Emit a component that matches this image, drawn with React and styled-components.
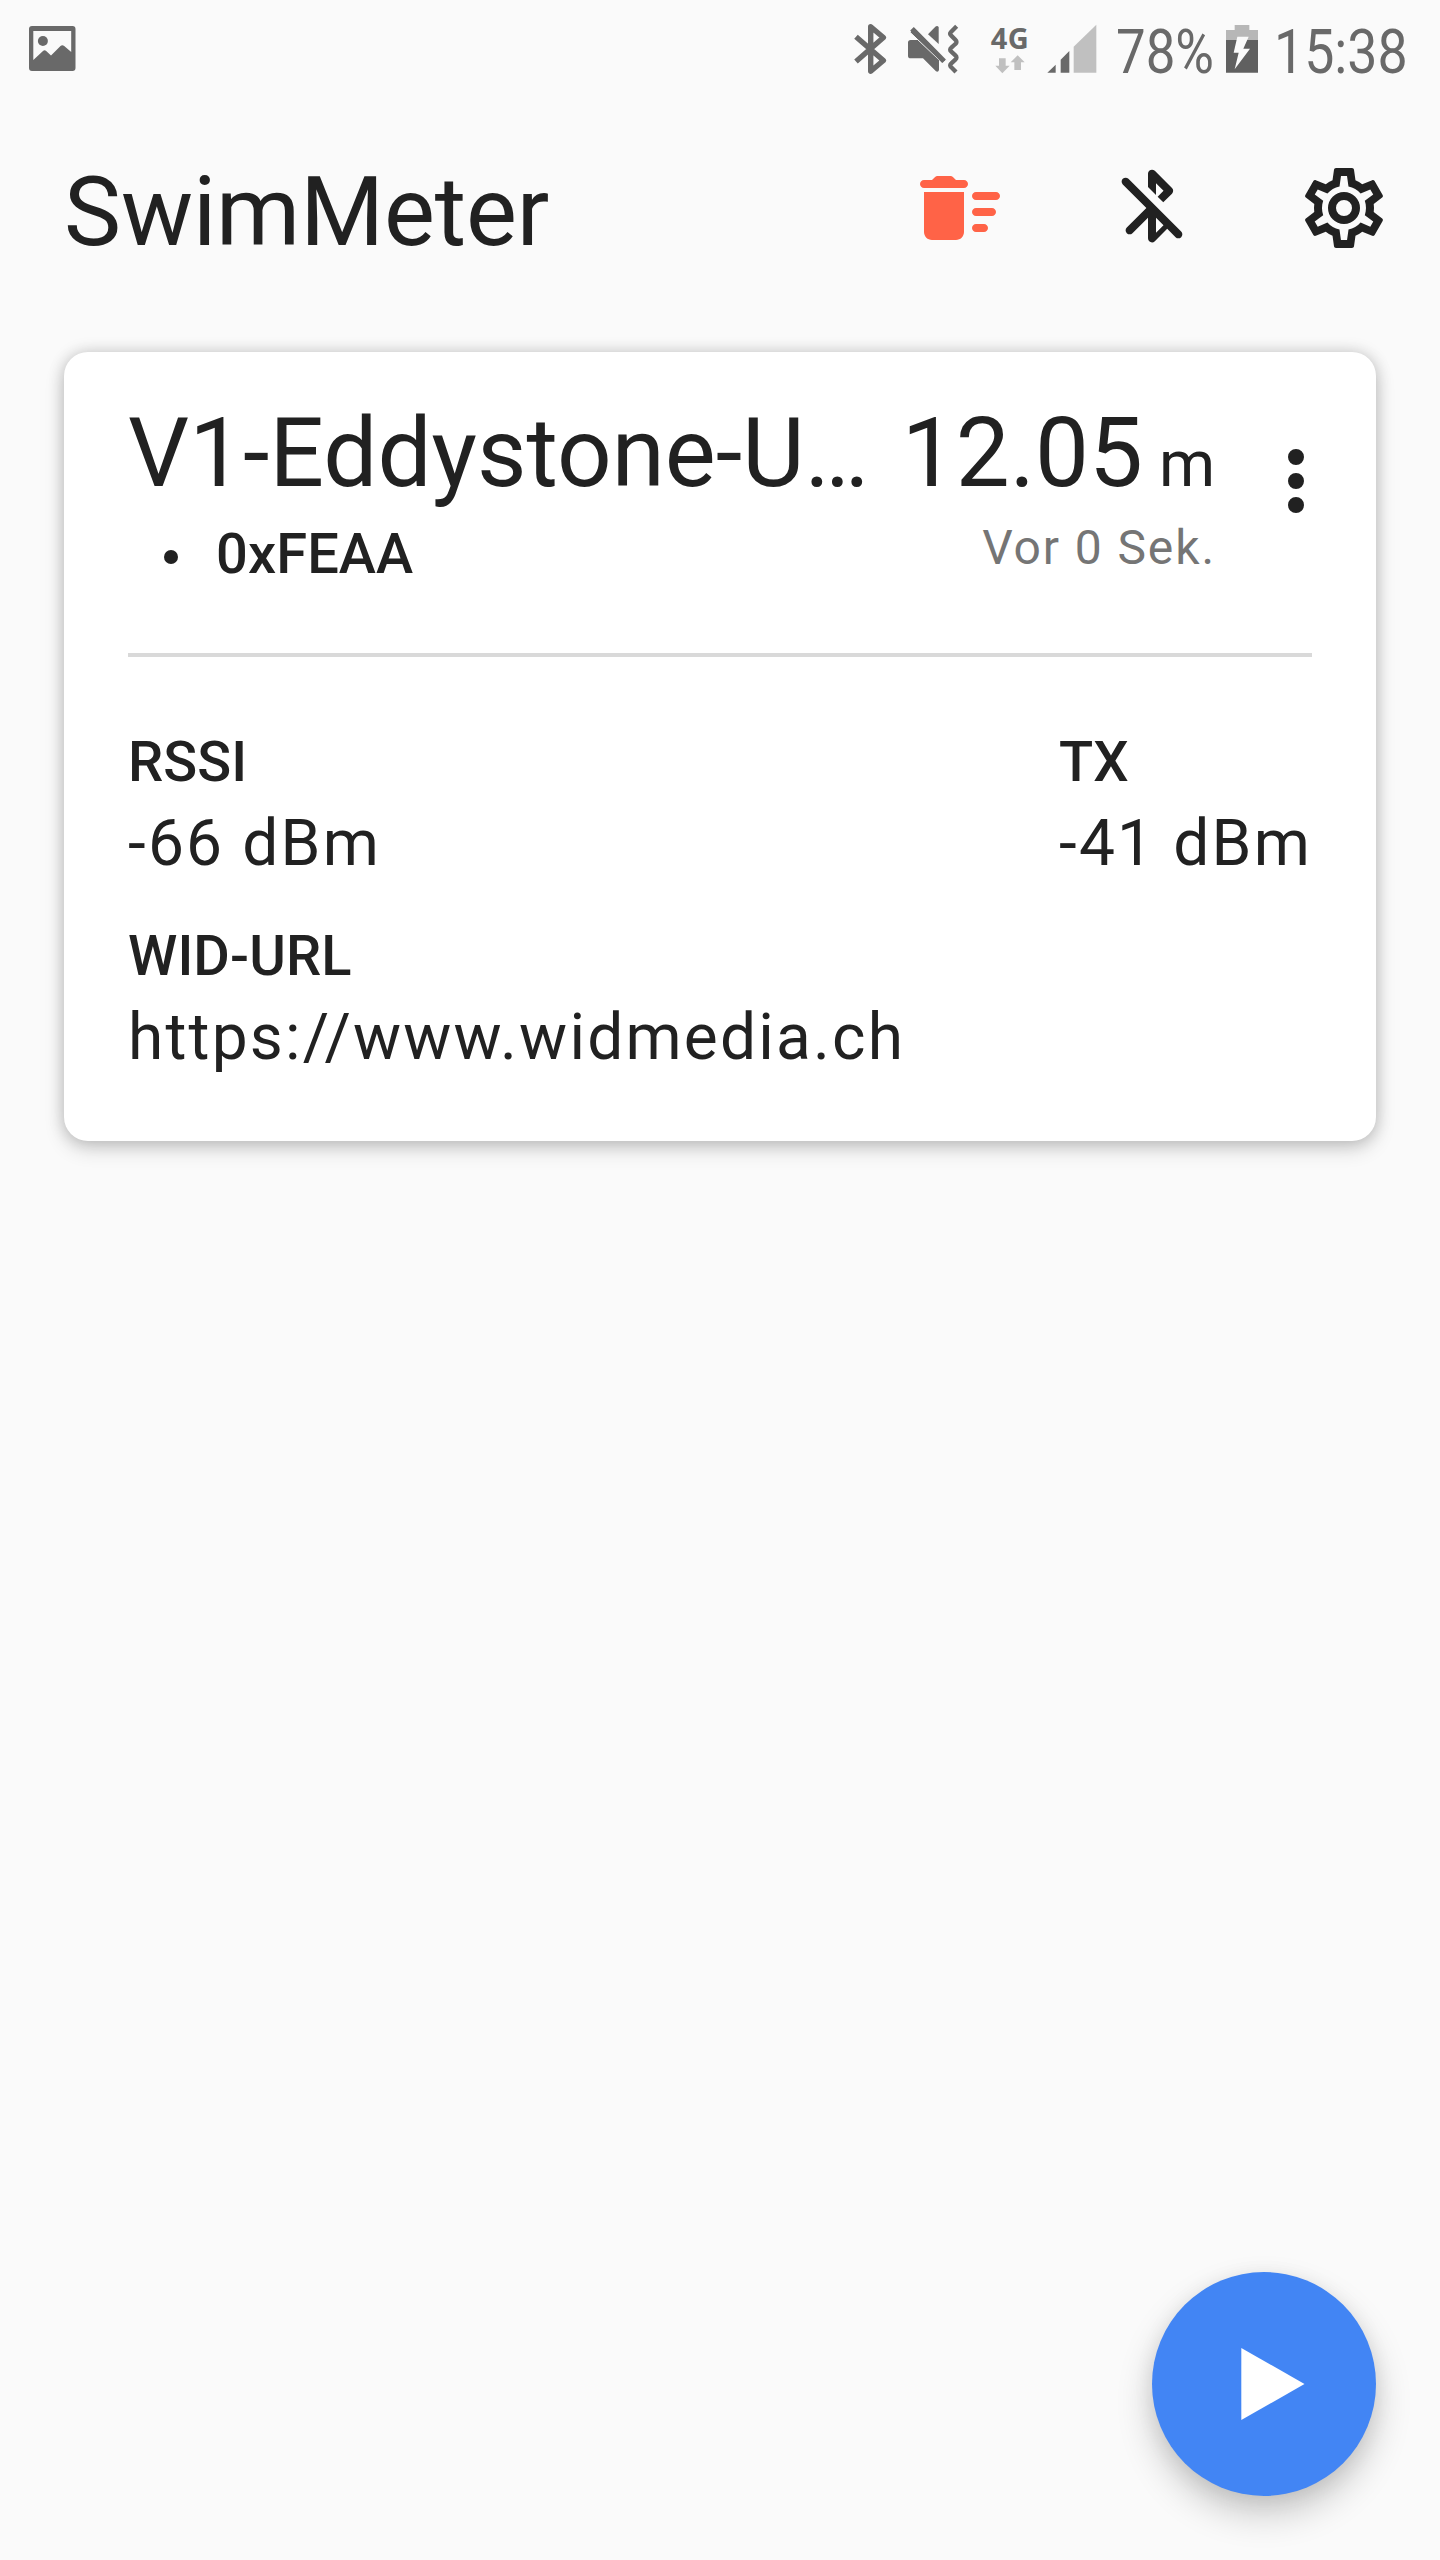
import React from "react";
import styled, { createGlobalStyle } from "styled-components";

const GlobalStyle = createGlobalStyle`
  * { box-sizing: border-box; }
  body { margin: 0; background: #fafafa; }
`;

const INK = "#212121";
const STATUS = "#696969";
const STATUS_LIGHT = "#c0c0c0";

const Screen = styled.div`
  width: 1440px;
  height: 2560px;
  display: flex;
  flex-direction: column;
  background: #fafafa;
  color: ${INK};
  font-family: Roboto, "Liberation Sans", sans-serif;
  overflow: hidden;
`;

const StatusBar = styled.header`
  height: 96px;
  display: flex;
  align-items: center;
  justify-content: space-between;
  padding: 0 33px 0 28px;
  color: ${STATUS};
`;

const StatusGroup = styled.div`
  display: flex;
  align-items: center;
  height: 96px;
`;

const Glyph = styled.svg`
  display: block;
  flex: none;
  width: ${(p) => p.$w}px;
  height: ${(p) => p.$h || 96}px;
  margin-left: ${(p) => p.$gap || 0}px;
`;

const Network = styled.div`
  width: 40px;
  height: 96px;
  margin-left: 31px;
  padding-top: 20px;
  display: flex;
  flex-direction: column;
  align-items: center;
`;

const NetworkLabel = styled.span`
  font: 700 29px/35px "Noto Sans", sans-serif;
  letter-spacing: 0.4px;
`;

const StatusText = styled.span`
  width: ${(p) => p.$w}px;
  margin-left: ${(p) => p.$gap}px;
  padding-top: 7px;
  font-size: 61px;
  line-height: 90px;
  white-space: nowrap;
`;

const Condensed = styled.span`
  display: inline-block;
  transform: scaleX(${(p) => p.$ratio});
  transform-origin: left center;
`;

const Toolbar = styled.div`
  height: 224px;
  display: flex;
  align-items: center;
  padding-left: 64px;
`;

const AppTitle = styled.h1`
  flex: 1;
  margin: 0;
  padding-top: 8px;
  font-size: 96px;
  line-height: 112px;
  font-weight: 400;
  letter-spacing: -0.12px;
`;

const IconButton = styled.button`
  width: 192px;
  height: 192px;
  display: flex;
  align-items: center;
  justify-content: center;
  padding: 0;
  border: 0;
  background: none;
  color: ${(p) => p.$color || INK};
`;

const Content = styled.main`
  flex: 1;
  padding: 32px 64px 0;
`;

const Card = styled.article`
  height: 789px;
  padding: 45px 64px 0;
  border-radius: 24px;
  background: #fff;
  box-shadow: 0 8px 20px rgba(0, 0, 0, 0.16), 0 0 16px rgba(0, 0, 0, 0.18);
`;

const CardHeader = styled.div`
  display: flex;
  height: 256px;
`;

const Identity = styled.div`
  flex: 1;
  min-width: 0;
`;

const Name = styled.h2`
  margin: 0;
  font-size: 96px;
  line-height: 112px;
  font-weight: 400;
  white-space: nowrap;
`;

const Services = styled.ul`
  margin: 13px 0 0;
  padding: 0;
  list-style: none;
`;

const Service = styled.li`
  display: flex;
  align-items: center;
  padding-left: 36px;
  font-size: 56px;
  line-height: 64px;
  font-weight: 500;
  letter-spacing: 0.1px;

  &::before {
    content: "";
    width: 14px;
    height: 14px;
    margin: 6px 38px 0 0;
    border-radius: 50%;
    background: ${INK};
  }
`;

const Reading = styled.div`
  text-align: right;
`;

const Distance = styled.div`
  padding-right: 1px;
  font-size: 96px;
  line-height: 112px;
  white-space: nowrap;
`;

const Unit = styled.span`
  margin-left: 16px;
  font-size: 64px;
  line-height: 1;
`;

const Seen = styled.div`
  margin-top: 11px;
  color: #757575;
  font-size: 48px;
  line-height: 56px;
  letter-spacing: 1.9px;
`;

const MenuButton = styled.button`
  width: 96px;
  height: 96px;
  margin: 36px -32px 0 32px;
  padding: 0;
  border: 0;
  background: none;
  color: ${INK};
`;

const Divider = styled.hr`
  height: 4px;
  margin: 0 0 73px;
  border: 0;
  background: #d9d9d9;
`;

const Fields = styled.dl`
  margin: 0;
  display: flex;
  flex-wrap: wrap;
  justify-content: space-between;
  row-gap: 42px;
`;

const Field = styled.div`
  flex: ${(p) => (p.$wide ? "0 0 100%" : "none")};
`;

const Label = styled.dt`
  font-size: 56px;
  line-height: 64px;
  font-weight: 500;
  letter-spacing: 0.1px;
`;

const Value = styled.dd`
  margin: 12px 0 0;
  font-size: 64px;
  line-height: 76px;
  letter-spacing: 2.2px;
`;

const Footer = styled.footer`
  display: flex;
  justify-content: flex-end;
  padding: 0 64px 64px;
`;

const Fab = styled.button`
  width: 224px;
  height: 224px;
  padding: 0;
  border: 0;
  border-radius: 50%;
  background: #4285f4;
  box-shadow: 0 18px 36px rgba(0, 0, 0, 0.2), 0 4px 20px rgba(0, 0, 0, 0.08);
`;

const Icon = ({ d }) => (
  <Glyph $w={96} $h={96} viewBox="0 0 24 24" fill="currentColor">
    <path d={d} />
  </Glyph>
);

const DELETE_SWEEP =
  "M16 16h2c.55 0 1 .45 1 1s-.45 1-1 1h-2c-.55 0-1-.45-1-1s.45-1 1-1zm0-8h5c.55 0 1 .45 1 1s-.45 1-1 1h-5c-.55 0-1-.45-1-1s.45-1 1-1zm0 4h4c.55 0 1 .45 1 1s-.45 1-1 1h-4c-.55 0-1-.45-1-1s.45-1 1-1zM3 18c0 1.1.9 2 2 2h6c1.1 0 2-.9 2-2V8H3v10zM13 5h-2l-.71-.71c-.18-.18-.44-.29-.7-.29H6.41c-.26 0-.52.11-.7.29L5 5H3c-.55 0-1 .45-1 1s.45 1 1 1h10c.55 0 1-.45 1-1s-.45-1-1-1z";
const BLUETOOTH_OFF =
  "M19.29 17.89L6.11 4.7c-.39-.39-1.02-.39-1.41 0-.39.39-.39 1.02 0 1.41L10.59 12 5.7 16.89c-.39.39-.39 1.02 0 1.41.39.39 1.02.39 1.41 0L11 14.41v5.18c0 .89 1.08 1.34 1.71.71l3.09-3.09 2.09 2.09c.39.39 1.02.39 1.41 0s.39-1.02-.01-1.41zM13 18.17v-3.76l1.88 1.88L13 18.17zm0-12.34l1.88 1.88-1.47 1.47 1.41 1.41L17 8.42c.39-.39.39-1.02 0-1.42l-4.29-4.29c-.63-.63-1.71-.19-1.71.7v3.36l2 2V5.83z";
const COG =
  "M12,8A4,4 0 0,1 16,12A4,4 0 0,1 12,16A4,4 0 0,1 8,12A4,4 0 0,1 12,8M12,10A2,2 0 0,0 10,12A2,2 0 0,0 12,14A2,2 0 0,0 14,12A2,2 0 0,0 12,10M10,22C9.75,22 9.54,21.82 9.5,21.58L9.13,18.93C8.5,18.68 7.96,18.34 7.44,17.94L4.95,18.95C4.73,19.03 4.46,18.95 4.34,18.73L2.34,15.27C2.21,15.05 2.27,14.78 2.46,14.63L4.57,12.97L4.5,12L4.57,11L2.46,9.37C2.27,9.22 2.21,8.95 2.34,8.73L4.34,5.27C4.46,5.05 4.73,4.96 4.95,5.05L7.44,6.05C7.96,5.66 8.5,5.32 9.13,5.07L9.5,2.42C9.54,2.18 9.75,2 10,2H14C14.25,2 14.46,2.18 14.5,2.42L14.87,5.07C15.5,5.32 16.04,5.66 16.56,6.05L19.05,5.05C19.27,4.96 19.54,5.05 19.66,5.27L21.66,8.73C21.79,8.95 21.73,9.22 21.54,9.37L19.43,11L19.5,12L19.43,13L21.54,14.63C21.73,14.78 21.79,15.05 21.66,15.27L19.66,18.73C19.54,18.95 19.27,19.04 19.05,18.95L16.56,17.95C16.04,18.34 15.5,18.68 14.87,18.93L14.5,21.58C14.46,21.82 14.25,22 14,22H10M11.25,4L10.88,6.61C9.68,6.86 8.62,7.5 7.85,8.39L5.44,7.35L4.69,8.65L6.8,10.2C6.4,11.37 6.4,12.64 6.8,13.8L4.68,15.36L5.43,16.66L7.86,15.62C8.63,16.5 9.68,17.14 10.87,17.38L11.24,20H12.76L13.13,17.39C14.32,17.14 15.37,16.5 16.14,15.62L18.57,16.66L19.32,15.36L17.2,13.81C17.6,12.64 17.6,11.37 17.2,10.2L19.31,8.65L18.56,7.35L16.15,8.39C15.38,7.5 14.32,6.86 13.12,6.62L12.75,4H11.25Z";
const MORE_VERT =
  "M12 8a2 2 0 1 0 0-4 2 2 0 0 0 0 4zm0 2a2 2 0 1 0 0 4 2 2 0 0 0 0-4zm0 6a2 2 0 1 0 0 4 2 2 0 0 0 0-4z";

const PictureIcon = () => (
  <Glyph $w={48} viewBox="28 0 48 96" fill={STATUS}>
    <path
      fillRule="evenodd"
      d="M32 26H72.500Q75.500 26 75.500 29V68Q75.500 71 72.500 71H32Q29 71 29 68V29Q29 26 32 26ZM33.300 31V60L43 51Q44.600 49.600 46.200 51L51 55.500L60.500 46Q62.300 44.300 64.200 46L71.200 52V31Z"
    />
    <circle cx="42.900" cy="41" r="5" />
  </Glyph>
);

const BluetoothIcon = () => (
  <Glyph $w={34} viewBox="854 0 34 96" fill="none" stroke={STATUS} strokeWidth="5.4" strokeLinejoin="round">
    <path d="M856 36.700L883.400 60.500L870.700 71.200V26.800L883.400 37.500L856 61.500" />
  </Glyph>
);

const MutedIcon = () => (
  <Glyph $w={52} $gap={19} viewBox="201 0 156 288" fill={STATUS}>
    <path d="M212 120H246L297 172V210Q295 217 288 214L249 175H212Q204 175 204 167V128Q204 120 212 120Z" />
    <path d="M264 103L286 80Q292 76 296 81V132Z" />
    <path d="M210 97L222 81L319 180L307 189Z" stroke="#fafafa" strokeWidth="3" />
    <path d="M216 86L312 184" stroke={STATUS} strokeWidth="15" />
    <path
      d="M350 79L333 96Q327 102 334 107L346 119Q353 126 346 132L334 143Q327 149 334 155L346 166Q353 173 346 179L334 190Q327 196 334 202L348 216"
      fill="none"
      stroke={STATUS}
      strokeWidth="13"
    />
  </Glyph>
);

const TrafficArrows = () => (
  <Glyph $w={30} $h={19} viewBox="463 165 90 57" fill={STATUS_LIGHT}>
    <path d="M475 175H495V197H507L485 220L464 197H475ZM531 166L552 187H541V210H521V187H510Z" />
  </Glyph>
);

const SignalIcon = () => (
  <Glyph $w={50} $gap={17} viewBox="620 0 150 288" fill={STATUS}>
    <path d="M621 218L646 194V218ZM661 218V179L687 153V218Z" />
    <path d="M700 218V140L768 74V218Z" fill={STATUS_LIGHT} />
  </Glyph>
);

const BatteryIcon = () => (
  <Glyph $w={32} $gap={14} viewBox="378 0 96 288">
    <path d="M404 75H448V90H474V120H378V90H404Z" fill="#b7b7b7" />
    <path d="M378 120H474V218H378Z" fill="#606060" />
    <path d="M412 110H446L430 146H450L404 208L416 158H401Z" fill="#fafafa" />
  </Glyph>
);

export default function App() {
  return (
    <Screen>
      <GlobalStyle />
      <StatusBar>
        <PictureIcon />
        <StatusGroup>
          <BluetoothIcon />
          <MutedIcon />
          <Network>
            <NetworkLabel>4G</NetworkLabel>
            <TrafficArrows />
          </Network>
          <SignalIcon />
          <StatusText $w={96} $gap={19}>
            <Condensed $ratio={0.865}>78%</Condensed>
          </StatusText>
          <BatteryIcon />
          <StatusText $w={133} $gap={16}>
            <Condensed $ratio={0.88}>15:38</Condensed>
          </StatusText>
        </StatusGroup>
      </StatusBar>

      <Toolbar>
        <AppTitle>SwimMeter</AppTitle>
        <IconButton $color="#ff6347" aria-label="Liste leeren">
          <Icon d={DELETE_SWEEP} />
        </IconButton>
        <IconButton aria-label="Bluetooth">
          <Icon d={BLUETOOTH_OFF} />
        </IconButton>
        <IconButton aria-label="Einstellungen">
          <Icon d={COG} />
        </IconButton>
      </Toolbar>

      <Content>
        <Card>
          <CardHeader>
            <Identity>
              <Name>V1-Eddystone-U…</Name>
              <Services>
                <Service>0xFEAA</Service>
              </Services>
            </Identity>
            <Reading>
              <Distance>
                12.05<Unit>m</Unit>
              </Distance>
              <Seen>Vor 0 Sek.</Seen>
            </Reading>
            <MenuButton aria-label="Mehr">
              <Icon d={MORE_VERT} />
            </MenuButton>
          </CardHeader>
          <Divider />
          <Fields>
            <Field>
              <Label>RSSI</Label>
              <Value>-66 dBm</Value>
            </Field>
            <Field>
              <Label>TX</Label>
              <Value>-41 dBm</Value>
            </Field>
            <Field $wide>
              <Label>WID-URL</Label>
              <Value>https://www.widmedia.ch</Value>
            </Field>
          </Fields>
        </Card>
      </Content>

      <Footer>
        <Fab aria-label="Start">
          <Glyph $w={224} $h={224} viewBox="0 0 224 224" fill="#fff">
            <path d="M89.300 76L152.500 112L89.300 148Z" />
          </Glyph>
        </Fab>
      </Footer>
    </Screen>
  );
}
